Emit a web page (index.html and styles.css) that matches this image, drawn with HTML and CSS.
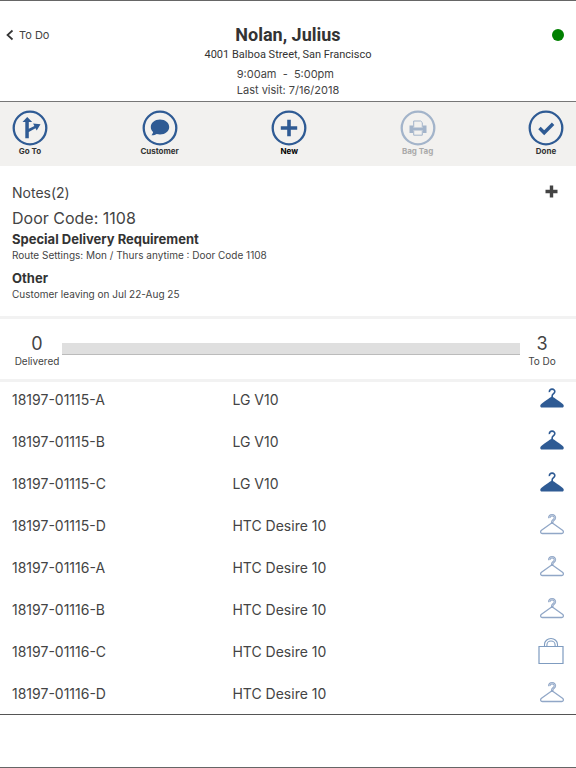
FILE: index.html
```html
<!DOCTYPE html>
<html lang="en">
<head>
<meta charset="utf-8">
<meta name="viewport" content="width=device-width, initial-scale=1">
<title>Nolan, Julius</title>
<link rel="stylesheet" href="styles.css">
</head>
<body>
<svg class="defs" aria-hidden="true">
  <symbol id="hanger-full" viewBox="0 0 24 21">
    <path d="M9.4 4.2C9.2 2.3 10.5 1 12.2 1.1c1.700.1 2.700 1.300 2.600 2.700-.1 1.700-2.500 2-2.600 4v2" fill="none" stroke="currentColor" stroke-width="1.600"/>
    <path d="M12 8.500c1.500.8 10 6.500 11.200 7.900 1 1.300.6 3.100-1 3.100H1.800c-1.600 0-2-1.800-1-3.100C2 15 10.500 9.300 12 8.500z" fill="currentColor"/>
  </symbol>
  <symbol id="hanger-line" viewBox="0 0 24 21">
    <path d="M9.300 4.200C9.100 2.300 10.400 1.200 12.200 1.300c1.700.1 2.800 1.300 2.700 2.700-.1 2-2.700 2-2.700 4v1" fill="none" stroke="currentColor" stroke-width="2.500"/>
    <path d="M9.300 4.200C9.100 2.300 10.400 1.200 12.200 1.300c1.700.1 2.800 1.300 2.700 2.700-.1 2-2.700 2-2.700 4" fill="none" stroke="#fff" stroke-width=".4"/>
    <path d="M12 8.800l10.500 7.400c1.500 1.300.9 3.300-.8 3.300H2.300c-1.700 0-2.300-2-.8-3.300z" fill="none" stroke="currentColor" stroke-width="1.300"/>
  </symbol>
  <symbol id="bag" viewBox="0 0 26 28">
    <path d="M1 9.500h24v17H1z" fill="none" stroke="currentColor" stroke-width="1.200"/>
    <path d="M6.500 9.500V7.500a6.500 6 0 0 1 13 0v2M8.900 9.500V8a4.100 4 0 0 1 8.200 0v1.500" fill="none" stroke="currentColor" stroke-width="1.100"/>
  </symbol>
</svg>
<main class="screen">
  <header class="header">
    <a class="back" href="#">
      <svg width="8" height="12" viewBox="0 0 8 12" aria-hidden="true"><path d="M6.500 1.500L1.500 6l5 4.500" fill="none" stroke="#333" stroke-width="1.700"/></svg>
      To Do
    </a>
    <div class="client">
      <h1>Nolan, Julius</h1>
      <p class="address">4001 Balboa Street, San Francisco</p>
      <div class="visit">
        <p>9:00am &nbsp;-&nbsp; 5:00pm</p>
        <p>Last visit: 7/16/2018</p>
      </div>
    </div>
    <span class="status" role="img" aria-label="Online"></span>
  </header>

  <nav class="toolbar">
    <button type="button">
      <svg viewBox="0 0 36 36" aria-hidden="true"><circle cx="18" cy="18" r="16.300"/><path class="solid" d="M15.200 7l5 5h-3.400v6.800l5.600-2.900-1.300-2.300 7.400.6-3.800 6.300-1.200-2.200-6.700 3.600v6.400h-3.500V12H10.500z"/></svg>
      Go To
    </button>
    <button type="button">
      <svg viewBox="0 0 36 36" aria-hidden="true"><circle cx="18" cy="18" r="16.300"/><path class="solid" d="M18 9.500c5.200 0 9.200 3.300 9.200 7.500s-4 7.500-9.200 7.500c-1.200 0-2.300-.2-3.300-.5-1.500 1-3.400 1.500-5.300 1.300 1-1 1.600-2.200 1.700-3.200C9.600 20.800 8.800 19 8.800 17c0-4.200 4-7.500 9.200-7.500z"/></svg>
      Customer
    </button>
    <button type="button" class="strong">
      <svg viewBox="0 0 36 36" aria-hidden="true"><circle cx="18" cy="18" r="16.300"/><path class="solid" d="M16.200 9.800h3.600v6.400h6.400v3.600h-6.400v6.400h-3.600v-6.400H9.800v-3.600h6.400z"/></svg>
      New
    </button>
    <button type="button" disabled>
      <svg viewBox="0 0 36 36" aria-hidden="true"><circle cx="18" cy="18" r="16.300"/><path class="solid" d="M9.500 15.500h3.500v2h10v-2h3.500V23H23v-2.500H13V23H9.500z"/><path class="thin" d="M13.700 17.500V11h7l1.600 1.600v4.900M13.700 20.500v4.700h8.600v-4.700"/></svg>
      Bag Tag
    </button>
    <button type="button">
      <svg viewBox="0 0 36 36" aria-hidden="true"><circle cx="18" cy="18" r="16.300"/><path class="check" d="M11.500 18l4.700 4.800 8.900-9"/></svg>
      Done
    </button>
  </nav>

  <section class="notes">
    <div class="notes-head">
      <h2>Notes(2)</h2>
      <button type="button" aria-label="Add note">
        <svg width="13" height="13" viewBox="0 0 13 13" aria-hidden="true"><path d="M6.500.5v12M.5 6.500h12" stroke="#444" stroke-width="3.400"/></svg>
      </button>
    </div>
    <p class="door">Door Code: 1108</p>
    <article>
      <h3>Special Delivery Requirement</h3>
      <p>Route Settings: Mon / Thurs anytime : Door Code 1108</p>
    </article>
    <article>
      <h3>Other</h3>
      <p>Customer leaving on Jul 22-Aug 25</p>
    </article>
  </section>

  <section class="summary">
    <div class="count"><strong>0</strong><label for="delivered">Delivered</label></div>
    <progress id="delivered" value="0" max="3"></progress>
    <div class="count todo"><strong>3</strong><span>To Do</span></div>
  </section>

  <table class="orders">
    <tbody>
      <tr><td>18197-01115-A</td><td>LG V10</td><td class="kind"><svg class="full"><use href="#hanger-full"/></svg></td></tr>
      <tr><td>18197-01115-B</td><td>LG V10</td><td class="kind"><svg class="full"><use href="#hanger-full"/></svg></td></tr>
      <tr><td>18197-01115-C</td><td>LG V10</td><td class="kind"><svg class="full"><use href="#hanger-full"/></svg></td></tr>
      <tr><td>18197-01115-D</td><td>HTC Desire 10</td><td class="kind"><svg><use href="#hanger-line"/></svg></td></tr>
      <tr><td>18197-01116-A</td><td>HTC Desire 10</td><td class="kind"><svg><use href="#hanger-line"/></svg></td></tr>
      <tr><td>18197-01116-B</td><td>HTC Desire 10</td><td class="kind"><svg><use href="#hanger-line"/></svg></td></tr>
      <tr><td>18197-01116-C</td><td>HTC Desire 10</td><td class="kind"><svg class="bag"><use href="#bag"/></svg></td></tr>
      <tr><td>18197-01116-D</td><td>HTC Desire 10</td><td class="kind"><svg><use href="#hanger-line"/></svg></td></tr>
    </tbody>
  </table>
</main>
</body>
</html>
```
FILE: styles.css
```css
* { box-sizing: border-box; }

body {
  margin: 0;
  background: #fff;
  color: #444;
  font-family: Inter, "Liberation Sans", sans-serif;
  font-size: 11px;
  line-height: 16px;
}

h1, h2, h3, p { margin: 0; }

button {
  border: 0;
  padding: 0;
  background: none;
  font: inherit;
  color: inherit;
}

.defs { display: none; }

.screen {
  min-height: 100vh;
  border-top: 1px solid #666;
  border-bottom: 1px solid #666;
}

.header {
  display: grid;
  grid-template-columns: 1fr auto 1fr;
  padding: 20px 12px 3px;
  border-bottom: 1px solid #777;
}

.back {
  display: flex;
  align-items: center;
  gap: 5px;
  height: 27px;
  margin-left: -6px;
  color: #444;
  text-decoration: none;
}

.client { text-align: center; }

h1 {
  color: #333;
  font: 700 18px/27px Roboto, sans-serif;
}

.address {
  color: #333;
  font: 400 11px/14px Roboto, sans-serif;
}

.visit {
  width: max-content;
  margin: 4px auto 0;
  text-align: left;
}

.status {
  width: 12px;
  height: 12px;
  margin-top: 8px;
  justify-self: end;
  border-radius: 50%;
  background: #008000;
}

.toolbar {
  display: flex;
  justify-content: space-between;
  padding: 8px 12px 10px;
  background: #f2f1ef;
}

.toolbar button {
  display: flex;
  flex-direction: column;
  align-items: center;
  min-width: 36px;
  color: #333;
  font-size: 8px;
  font-weight: 700;
  line-height: 10px;
}

.toolbar svg {
  width: 36px;
  height: 36px;
  fill: none;
  stroke: #2f5b94;
  stroke-width: 2.3;
}

.toolbar .solid { fill: #2f5b94; stroke: none; }
.toolbar .check { stroke-width: 3.4; }
.toolbar .thin { stroke-width: 1; }
.toolbar .strong { color: #000; }
.toolbar button:disabled { color: #aaa; }
.toolbar button:disabled svg { opacity: .4; }

.notes {
  padding: 18px 12px 14px;
  border-bottom: 3px solid #f2f2f2;
}

.notes-head {
  display: flex;
  justify-content: space-between;
  padding-right: 6px;
}

.notes-head button { height: 18px; }

h2 {
  font-size: 14px;
  font-weight: 400;
  line-height: 18px;
}

.door {
  margin-top: 5px;
  font-size: 16px;
  line-height: 22px;
}

h3 {
  color: #333;
  font-size: 13px;
  font-weight: 700;
  line-height: 16px;
}

.notes article { margin-top: 2px; }
.notes article + article { margin-top: 7px; }
.notes article p { font-size: 10px; }

.summary {
  display: flex;
  align-items: center;
  padding: 15px 12px 11px;
  border-bottom: 3px solid #f2f2f2;
}

.count {
  width: 50px;
  display: flex;
  flex-direction: column;
  align-items: center;
}

.todo { width: 44px; }

.count strong {
  font-size: 18px;
  font-weight: 400;
  line-height: 20px;
}

.count label, .count span { font-size: 10px; line-height: 14px; }

progress {
  flex: 1;
  min-width: 0;
  height: 12px;
  margin-bottom: 4px;
  appearance: none;
  border: 0;
  border-bottom: 1px solid #bbb;
  background: #dfdfdf;
}

progress::-webkit-progress-bar { background: #dfdfdf; }
progress::-webkit-progress-value { background: #2f5b94; }

.orders {
  width: 100%;
  border-collapse: collapse;
  border-bottom: 1px solid #555;
  font-size: 14px;
  line-height: 18px;
}

.orders td {
  height: 42px;
  padding: 0 0 6px 2px;
}

.orders td:first-child { width: 40%; padding-left: 12px; }

.orders tr:last-child td { height: 38px; padding-bottom: 2px; }

.orders .kind { padding-right: 12px; }

.kind svg {
  display: block;
  width: 24px;
  height: 21px;
  margin-left: auto;
  margin-bottom: 3px;
  color: #91a7c7;
}

.kind .full { color: #2f5b94; }

.kind .bag {
  width: 26px;
  height: 28px;
  color: #7f9cc0;
}
```
